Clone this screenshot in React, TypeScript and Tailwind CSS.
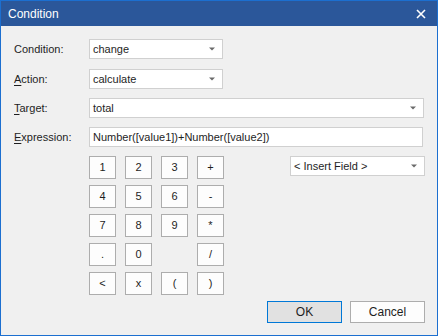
import React from 'react';

const font = { fontFamily: '"Liberation Sans", Arial, sans-serif' };

const Arrow = () => (
  <svg width="6" height="4" viewBox="0 0 6 4" className="shrink-0">
    <polygon points="0,0.5 6,0.5 3,3.5" fill="#6a6a6a" />
  </svg>
);

const Combo = ({ value, className }: { value: string; className: string }) => (
  <div className={`h-[20px] flex items-center justify-between bg-white border border-[#d0d0d0] pl-[3px] pr-[7px] text-[#1e1e1e] ${className}`}>
    <span>{value}</span>
    <Arrow />
  </div>
);

const Label = ({ k, rest }: { k?: string; rest: string }) => (
  <div className="w-[75px] shrink-0 text-[#1e1e1e]">
    {k && <span className="underline underline-offset-2">{k}</span>}
    {rest}
  </div>
);

const keys = ['1', '2', '3', '+', '4', '5', '6', '-', '7', '8', '9', '*', '.', '0', '', '/', '<', 'x', '(', ')'];

export default function App() {
  return (
    <div className="w-[438px] h-[336px] bg-[#f0f0f0] border border-[#1c6fd0] flex flex-col text-[11px]" style={font}>
      {/* Title bar */}
      <div className="h-[25px] bg-[#2b579a] flex items-center justify-between pl-[7px] pr-[11px] text-white text-[12px]">
        <span>Condition</span>
        <svg width="10" height="10" viewBox="0 0 10 10">
          <path d="M1 1 L9 9 M9 1 L1 9" stroke="#fff" strokeWidth="1.6" />
        </svg>
      </div>

      <div className="flex flex-col pl-[13px] pr-[12px] pt-[13px]">
        <div className="flex items-center">
          <Label rest="Condition:" />
          <Combo value="change" className="w-[134px]" />
        </div>
        <div className="flex items-center mt-[10px]">
          <Label k="A" rest="ction:" />
          <Combo value="calculate" className="w-[134px]" />
        </div>
        <div className="flex items-center mt-[9px] pr-px">
          <Label k="T" rest="arget:" />
          <Combo value="total" className="flex-1" />
        </div>
        <div className="flex items-center mt-[9px] pr-[2px]">
          <Label k="E" rest="xpression:" />
          <div className="flex-1 h-[20px] flex items-center bg-white border border-[#d0d0d0] pl-[3px] text-[#1e1e1e]">
            Number([value1])+Number([value2])
          </div>
        </div>

        <div className="flex items-start mt-[9px]">
          <div className="ml-[75px] grid grid-cols-[27px_27px_27px_27px] gap-x-[9px] gap-y-[6px]">
            {keys.map((k, i) =>
              k ? (
                <div key={i} className="h-[23px] flex items-center justify-center bg-[#fdfdfd] border border-[#adadad] text-[#1e1e1e]">
                  {k}
                </div>
              ) : (
                <div key={i} />
              )
            )}
          </div>
          <Combo value="< Insert Field >" className="ml-auto w-[135px]" />
        </div>

        <div className="flex justify-end gap-[8px] mt-[6px]">
          <div className="w-[75px] h-[22px] flex items-center justify-center bg-[#e1e1e1] border border-[#0078d7] text-[#1e1e1e] text-[12px]">
            OK
          </div>
          <div className="w-[75px] h-[22px] flex items-center justify-center bg-[#fdfdfd] border border-[#adadad] text-[#1e1e1e] text-[12px]">
            Cancel
          </div>
        </div>
      </div>
    </div>
  );
}
